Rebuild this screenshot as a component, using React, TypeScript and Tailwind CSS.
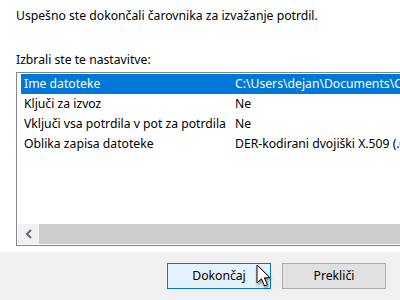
const rows = [
  { name: "Ime datoteke", value: "C:\\Users\\dejan\\Documents\\Certifikat.cer", selected: true },
  { name: "Ključi za izvoz", value: "Ne" },
  { name: "Vključi vsa potrdila v pot za potrdila", value: "Ne" },
  { name: "Oblika zapisa datoteke", value: "DER-kodirani dvojiški X.509 (.CER)" },
];

function Cursor() {
  return (
    <svg
      className="absolute left-[256px] top-[264px]"
      width="16"
      height="26"
      viewBox="0 0 16 26"
      style={{ filter: "drop-shadow(1px 2px 1.5px rgba(0,0,0,0.45))" }}
    >
      <path
        d="M1 1 L1 19 L5.5 14.8 L8.6 22 L11.4 20.8 L8.4 13.8 L14 13.8 Z"
        fill="#fff"
        stroke="#000"
        strokeWidth="1"
        strokeLinejoin="miter"
      />
    </svg>
  );
}

export default function App() {
  return (
    <div className="relative w-[400px] h-[300px] overflow-hidden bg-white text-[12.2px] text-black font-['Noto_Sans',sans-serif]">
      <div className="h-[252px] bg-white pl-4">
        <p className="pt-[8px] leading-[16px]">Uspešno ste dokončali čarovnika za izvažanje potrdil.</p>
        <p className="pt-[28px] leading-[16px]">Izbrali ste te nastavitve:</p>
        <div className="mt-[4px] h-[174px] w-[420px] border border-[#828790] flex flex-col">
          <div className="flex-1 pl-[4px] pt-[1px]">
            {rows.map((r) => (
              <div
                key={r.name}
                className={`flex h-[20px] items-center whitespace-nowrap ${
                  r.selected ? "bg-[#0078d7] text-white" : ""
                }`}
              >
                <span className="w-[208px] shrink-0 pl-[3px]">{r.name}</span>
                <span className="pl-[6px]">{r.value}</span>
              </div>
            ))}
          </div>
          <div className="flex h-[20px] mb-[1px] ml-[1px]">
            <div className="flex w-[21px] items-center justify-center bg-[#f0f0f0]">
              <svg width="8" height="10" viewBox="0 0 8 10">
                <path d="M6 1 L2 5 L6 9" fill="none" stroke="#606060" strokeWidth="1.8" />
              </svg>
            </div>
            <div className="flex-1 bg-[#cdcdcd]" />
          </div>
        </div>
      </div>
      <div className="flex h-[48px] justify-end gap-[11px] bg-[#f0f0f0] pt-[11px] pr-[14px]">
        <button className="h-[26px] w-[104px] border border-[#0078d7] bg-[#e5f1fb] leading-none">
          Dokončaj
        </button>
        <button className="h-[26px] w-[104px] border border-[#adadad] bg-[#e1e1e1] leading-none">
          Prekliči
        </button>
      </div>
      <Cursor />
    </div>
  );
}
